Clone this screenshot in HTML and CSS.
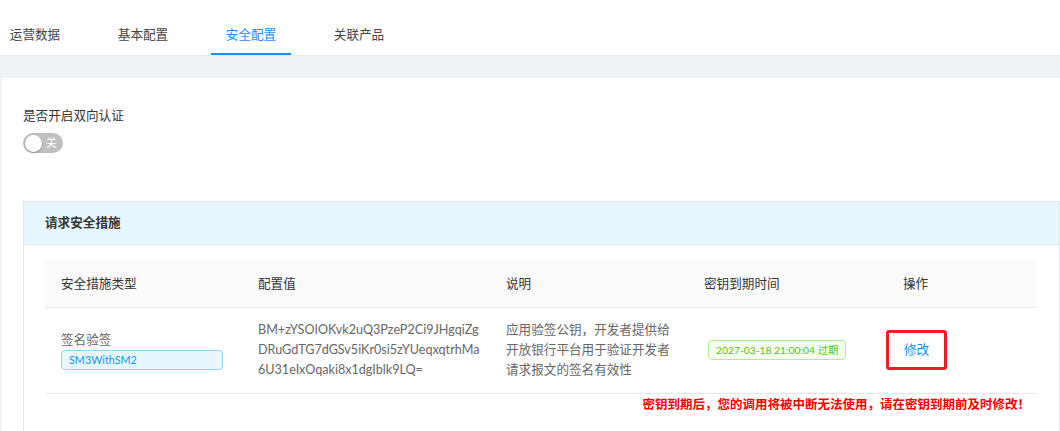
FILE: index.html
```html
<!DOCTYPE html>
<html lang="zh-CN">
<head>
<meta charset="utf-8">
<title>安全配置</title>
<link rel="stylesheet" href="styles.css">
</head>
<body>
<div class="tabs">
  <div class="tab">运营数据</div>
  <div class="tab">基本配置</div>
  <div class="tab active">安全配置</div>
  <div class="tab">关联产品</div>
</div>
<div class="content">
  <div class="card">
    <div class="field-label">是否开启双向认证</div>
    <div class="switch"><span class="knob"></span><span class="switch-text">关</span></div>
    <div class="panel">
      <div class="panel-head">请求安全措施</div>
      <div class="panel-body">
        <table class="tbl">
          <colgroup>
            <col class="c1"><col class="c2"><col class="c3"><col class="c4"><col class="c5">
          </colgroup>
          <thead>
            <tr><th>安全措施类型</th><th>配置值</th><th>说明</th><th>密钥到期时间</th><th>操作</th></tr>
          </thead>
          <tbody>
            <tr>
              <td>
                <div class="type-name">签名验签</div>
                <div class="tag-blue">SM3WithSM2</div>
              </td>
              <td><div class="value">BM+zYSOIOKvk2uQ3PzeP2Ci9JHgqiZg<br>DRuGdTG7dGSv5iKr0si5zYUeqxqtrhMa<br>6U31eIxOqaki8x1dgIblk9LQ=</div></td>
              <td><div class="desc">应用验签公钥，开发者提供给开放银行平台用于验证开发者请求报文的签名有效性</div></td>
              <td><span class="tag-green">2027-03-18 21:00:04 过期</span></td>
              <td><a class="edit">修改</a></td>
            </tr>
          </tbody>
        </table>
        <div class="warn">密钥到期后，您的调用将被中断无法使用，请在密钥到期前及时修改！</div>
      </div>
    </div>
  </div>
</div>
</body>
</html>
```
FILE: styles.css
```css
* { box-sizing: border-box; }
html, body {
  margin: 0;
  padding: 0;
}
body {
  background: #f0f2f5;
  font-family: "Lato", "Noto Sans CJK SC", sans-serif;
  font-size: 12.6px;
  color: #333;
  height: 431px;
  overflow: hidden;
}
.tabs {
  display: flex;
  gap: 28px;
  height: 56px;
  background: #fff;
  border-bottom: 1px solid #e8e8e8;
  margin-left: -5px;
}
.tab {
  width: 80px;
  text-align: center;
  padding-top: 26px;
  line-height: 18px;
  height: 55px;
  color: #444;
  border-bottom: 2px solid transparent;
}
.tab.active {
  color: #1890ff;
  border-bottom-color: #1890ff;
}
.content {
  padding-top: 22px;
  padding-left: 2px;
}
.card {
  background: #fff;
  padding: 28px 0 0 21px;
  height: 353px;
  overflow: hidden;
}
.field-label {
  line-height: 20px;
  color: #333;
}
.switch {
  margin-top: 7px;
  width: 40px;
  height: 20px;
  border-radius: 10px;
  background: #bfbfbf;
  display: flex;
  align-items: center;
  padding: 0 2px;
}
.knob {
  width: 17px;
  height: 17px;
  border-radius: 50%;
  background: #fff;
  box-shadow: 0 1px 2px rgba(0, 0, 0, 0.3);
}
.switch-text {
  margin-left: 4px;
  color: #fff;
  font-size: 10.8px;
  line-height: 20px;
}
.panel {
  margin-top: 48px;
  border: 1px solid #e3e6ea;
  height: 240px;
}
.panel-head {
  height: 43px;
  background: #e6f7ff;
  border-bottom: 1px solid #e3e6ea;
  padding-left: 21px;
  line-height: 42px;
  font-weight: bold;
  color: #333;
}
.panel-body {
  padding: 14px 21px 0 21px;
}
.tbl {
  width: 992px;
  border-collapse: collapse;
  table-layout: fixed;
}
.c1 { width: 197px; }
.c2 { width: 248px; }
.c3 { width: 198px; }
.c4 { width: 199px; }
.c5 { width: 150px; }
.tbl th {
  background: #fafafa;
  height: 48px;
  padding: 0 16px;
  text-align: left;
  font-weight: normal;
  color: #333;
  border-bottom: 1px solid #e8e8e8;
}
.tbl td {
  height: 86px;
  padding: 0 16px;
  color: #666;
  border-bottom: 1px solid #e8e8e8;
  vertical-align: middle;
  line-height: 20px;
}
.type-name {
  line-height: 20px;
}
.tag-blue {
  width: 162px;
  height: 20px;
  line-height: 18px;
  border: 1px solid #91d5ff;
  background: #e6f7ff;
  color: #1890ff;
  border-radius: 4px;
  padding: 0 7px;
  font-size: 10.8px;
}
.value {
  white-space: nowrap;
}
.desc {
  width: 166px;
}
.tag-green {
  display: inline-block;
  margin-left: 4px;
  height: 20px;
  line-height: 18px;
  border: 1px solid #b7eb8f;
  background: #f6ffed;
  color: #52c41a;
  border-radius: 4px;
  padding: 0 7px;
  font-size: 10.3px;
}
.edit {
  display: inline-block;
  margin-left: -17px;
  width: 61px;
  height: 40px;
  line-height: 34px;
  text-align: center;
  border: 3px solid #ee1c25;
  border-radius: 3px;
  color: #1890ff;
  cursor: pointer;
}
.warn {
  text-align: right;
  padding-right: 8px;
  margin-top: 2px;
  line-height: 18px;
  font-size: 12.5px;
  color: #ff0000;
  font-weight: bold;
}
```
